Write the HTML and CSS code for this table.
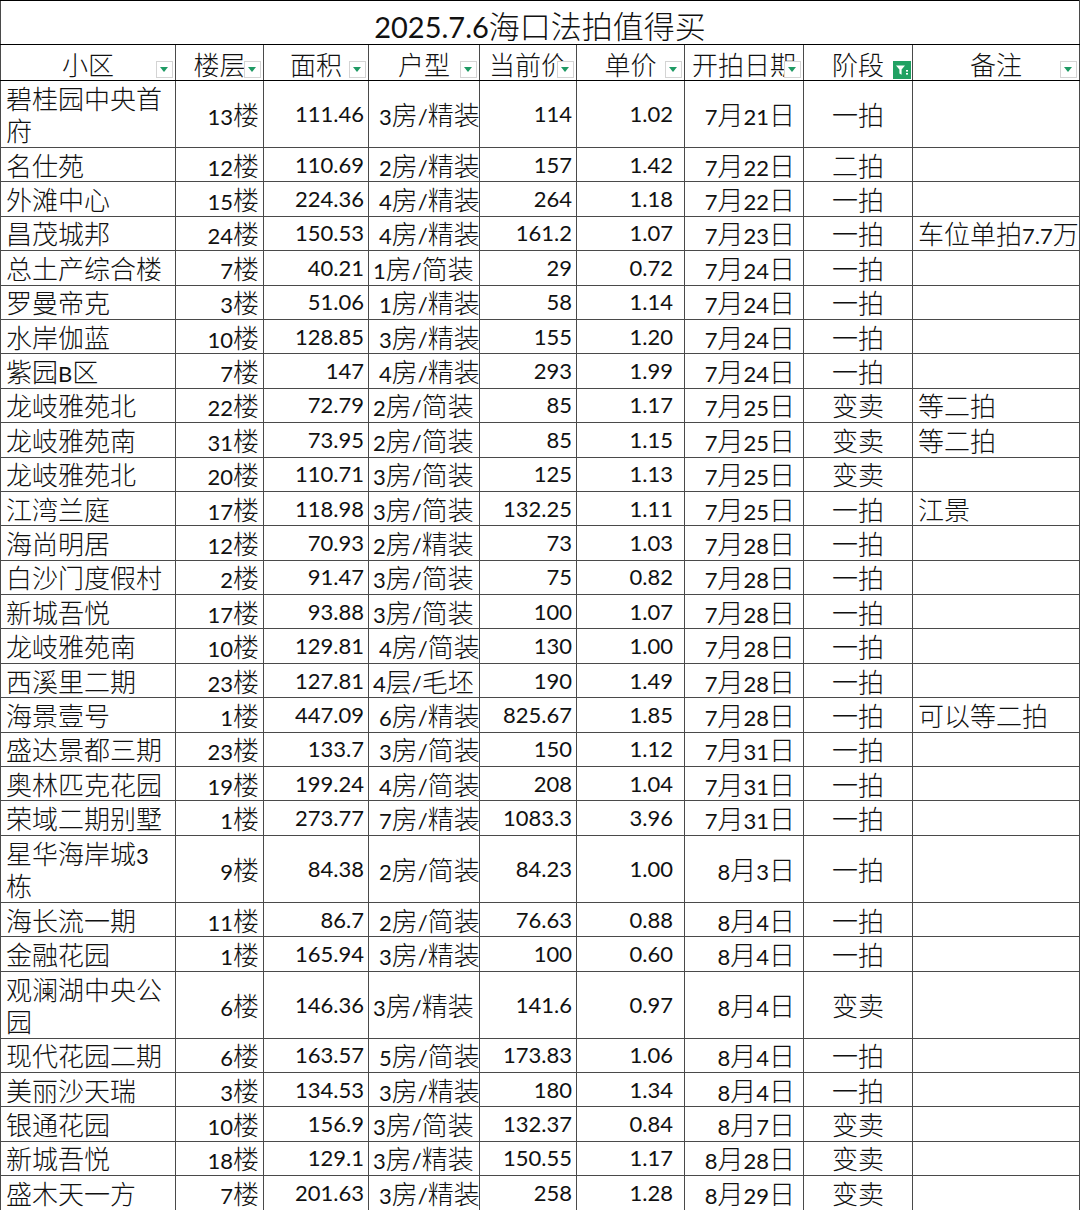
FILE: index.html
```html
<!DOCTYPE html>
<html lang="zh-CN">
<head>
<meta charset="utf-8">
<title>2025.7.6海口法拍值得买</title>
<link rel="stylesheet" href="styles.css">
</head>
<body>
<table class="sheet">
<colgroup>
<col class="w1"><col class="w2"><col class="w3"><col class="w4"><col class="w5"><col class="w6"><col class="w7"><col class="w8"><col class="w9">
</colgroup>
<tr class="title"><td colspan="9"><span class="tn">2025.7.6</span>海口法拍值得买</td></tr>
<tr class="head">
<td>小区<span class="dd"></span></td>
<td>楼层<span class="dd"></span></td>
<td>面积<span class="dd"></span></td>
<td>户型<span class="dd"></span></td>
<td>当前价<span class="dd"></span></td>
<td>单价<span class="dd"></span></td>
<td>开拍日期<span class="dd"></span></td>
<td class="c8h">阶段<span class="flt"><svg width="18" height="18" viewBox="0 0 18 18"><rect width="18" height="18" fill="#21a163"/><path d="M3 4.5h9l-3.4 4v5.2l-2.2-1.2v-4z" fill="#fff"/><rect x="13" y="9" width="2" height="1.6" fill="#fff"/><rect x="13" y="12" width="2" height="1.6" fill="#fff"/></svg></span></td>
<td>备注<span class="dd"></span></td>
</tr>
<tr class="t"><td class="c1">碧桂园中央首<br>府</td><td class="c2"><span class="n">13</span>楼</td><td class="c3 n">111.46</td><td class="c4 sp"><span class="n">3</span>房<span class="n">/</span>精装</td><td class="c5 n">114</td><td class="c6 n">1.02</td><td class="c7"><span class="n">7</span>月<span class="n">21</span>日</td><td class="c8">一拍</td><td class="c9"></td></tr>
<tr class="r"><td class="c1">名仕苑</td><td class="c2"><span class="n">12</span>楼</td><td class="c3 n">110.69</td><td class="c4 sp"><span class="n">2</span>房<span class="n">/</span>精装</td><td class="c5 n">157</td><td class="c6 n">1.42</td><td class="c7"><span class="n">7</span>月<span class="n">22</span>日</td><td class="c8">二拍</td><td class="c9"></td></tr>
<tr class="r"><td class="c1">外滩中心</td><td class="c2"><span class="n">15</span>楼</td><td class="c3 n">224.36</td><td class="c4 sp"><span class="n">4</span>房<span class="n">/</span>精装</td><td class="c5 n">264</td><td class="c6 n">1.18</td><td class="c7"><span class="n">7</span>月<span class="n">22</span>日</td><td class="c8">一拍</td><td class="c9"></td></tr>
<tr class="r"><td class="c1">昌茂城邦</td><td class="c2"><span class="n">24</span>楼</td><td class="c3 n">150.53</td><td class="c4 sp"><span class="n">4</span>房<span class="n">/</span>精装</td><td class="c5 n">161.2</td><td class="c6 n">1.07</td><td class="c7"><span class="n">7</span>月<span class="n">23</span>日</td><td class="c8">一拍</td><td class="c9">车位单拍<span class="n">7.7</span>万</td></tr>
<tr class="r"><td class="c1">总土产综合楼</td><td class="c2"><span class="n">7</span>楼</td><td class="c3 n">40.21</td><td class="c4"><span class="n">1</span>房<span class="n">/</span>简装</td><td class="c5 n">29</td><td class="c6 n">0.72</td><td class="c7"><span class="n">7</span>月<span class="n">24</span>日</td><td class="c8">一拍</td><td class="c9"></td></tr>
<tr class="r"><td class="c1">罗曼帝克</td><td class="c2"><span class="n">3</span>楼</td><td class="c3 n">51.06</td><td class="c4 sp"><span class="n">1</span>房<span class="n">/</span>精装</td><td class="c5 n">58</td><td class="c6 n">1.14</td><td class="c7"><span class="n">7</span>月<span class="n">24</span>日</td><td class="c8">一拍</td><td class="c9"></td></tr>
<tr class="r"><td class="c1">水岸伽蓝</td><td class="c2"><span class="n">10</span>楼</td><td class="c3 n">128.85</td><td class="c4 sp"><span class="n">3</span>房<span class="n">/</span>精装</td><td class="c5 n">155</td><td class="c6 n">1.20</td><td class="c7"><span class="n">7</span>月<span class="n">24</span>日</td><td class="c8">一拍</td><td class="c9"></td></tr>
<tr class="r"><td class="c1">紫园<span class="n">B</span>区</td><td class="c2"><span class="n">7</span>楼</td><td class="c3 n">147</td><td class="c4 sp"><span class="n">4</span>房<span class="n">/</span>精装</td><td class="c5 n">293</td><td class="c6 n">1.99</td><td class="c7"><span class="n">7</span>月<span class="n">24</span>日</td><td class="c8">一拍</td><td class="c9"></td></tr>
<tr class="r"><td class="c1">龙岐雅苑北</td><td class="c2"><span class="n">22</span>楼</td><td class="c3 n">72.79</td><td class="c4"><span class="n">2</span>房<span class="n">/</span>简装</td><td class="c5 n">85</td><td class="c6 n">1.17</td><td class="c7"><span class="n">7</span>月<span class="n">25</span>日</td><td class="c8">变卖</td><td class="c9">等二拍</td></tr>
<tr class="r"><td class="c1">龙岐雅苑南</td><td class="c2"><span class="n">31</span>楼</td><td class="c3 n">73.95</td><td class="c4"><span class="n">2</span>房<span class="n">/</span>简装</td><td class="c5 n">85</td><td class="c6 n">1.15</td><td class="c7"><span class="n">7</span>月<span class="n">25</span>日</td><td class="c8">变卖</td><td class="c9">等二拍</td></tr>
<tr class="r"><td class="c1">龙岐雅苑北</td><td class="c2"><span class="n">20</span>楼</td><td class="c3 n">110.71</td><td class="c4"><span class="n">3</span>房<span class="n">/</span>简装</td><td class="c5 n">125</td><td class="c6 n">1.13</td><td class="c7"><span class="n">7</span>月<span class="n">25</span>日</td><td class="c8">变卖</td><td class="c9"></td></tr>
<tr class="r"><td class="c1">江湾兰庭</td><td class="c2"><span class="n">17</span>楼</td><td class="c3 n">118.98</td><td class="c4"><span class="n">3</span>房<span class="n">/</span>简装</td><td class="c5 n">132.25</td><td class="c6 n">1.11</td><td class="c7"><span class="n">7</span>月<span class="n">25</span>日</td><td class="c8">一拍</td><td class="c9">江景</td></tr>
<tr class="r"><td class="c1">海尚明居</td><td class="c2"><span class="n">12</span>楼</td><td class="c3 n">70.93</td><td class="c4"><span class="n">2</span>房<span class="n">/</span>精装</td><td class="c5 n">73</td><td class="c6 n">1.03</td><td class="c7"><span class="n">7</span>月<span class="n">28</span>日</td><td class="c8">一拍</td><td class="c9"></td></tr>
<tr class="r"><td class="c1">白沙门度假村</td><td class="c2"><span class="n">2</span>楼</td><td class="c3 n">91.47</td><td class="c4"><span class="n">3</span>房<span class="n">/</span>简装</td><td class="c5 n">75</td><td class="c6 n">0.82</td><td class="c7"><span class="n">7</span>月<span class="n">28</span>日</td><td class="c8">一拍</td><td class="c9"></td></tr>
<tr class="r"><td class="c1">新城吾悦</td><td class="c2"><span class="n">17</span>楼</td><td class="c3 n">93.88</td><td class="c4"><span class="n">3</span>房<span class="n">/</span>简装</td><td class="c5 n">100</td><td class="c6 n">1.07</td><td class="c7"><span class="n">7</span>月<span class="n">28</span>日</td><td class="c8">一拍</td><td class="c9"></td></tr>
<tr class="r"><td class="c1">龙岐雅苑南</td><td class="c2"><span class="n">10</span>楼</td><td class="c3 n">129.81</td><td class="c4 sp"><span class="n">4</span>房<span class="n">/</span>简装</td><td class="c5 n">130</td><td class="c6 n">1.00</td><td class="c7"><span class="n">7</span>月<span class="n">28</span>日</td><td class="c8">一拍</td><td class="c9"></td></tr>
<tr class="r"><td class="c1">西溪里二期</td><td class="c2"><span class="n">23</span>楼</td><td class="c3 n">127.81</td><td class="c4"><span class="n">4</span>层<span class="n">/</span>毛坯</td><td class="c5 n">190</td><td class="c6 n">1.49</td><td class="c7"><span class="n">7</span>月<span class="n">28</span>日</td><td class="c8">一拍</td><td class="c9"></td></tr>
<tr class="r"><td class="c1">海景壹号</td><td class="c2"><span class="n">1</span>楼</td><td class="c3 n">447.09</td><td class="c4 sp"><span class="n">6</span>房<span class="n">/</span>精装</td><td class="c5 n">825.67</td><td class="c6 n">1.85</td><td class="c7"><span class="n">7</span>月<span class="n">28</span>日</td><td class="c8">一拍</td><td class="c9">可以等二拍</td></tr>
<tr class="r"><td class="c1">盛达景都三期</td><td class="c2"><span class="n">23</span>楼</td><td class="c3 n">133.7</td><td class="c4 sp"><span class="n">3</span>房<span class="n">/</span>简装</td><td class="c5 n">150</td><td class="c6 n">1.12</td><td class="c7"><span class="n">7</span>月<span class="n">31</span>日</td><td class="c8">一拍</td><td class="c9"></td></tr>
<tr class="r"><td class="c1">奥林匹克花园</td><td class="c2"><span class="n">19</span>楼</td><td class="c3 n">199.24</td><td class="c4 sp"><span class="n">4</span>房<span class="n">/</span>简装</td><td class="c5 n">208</td><td class="c6 n">1.04</td><td class="c7"><span class="n">7</span>月<span class="n">31</span>日</td><td class="c8">一拍</td><td class="c9"></td></tr>
<tr class="r"><td class="c1">荣域二期别墅</td><td class="c2"><span class="n">1</span>楼</td><td class="c3 n">273.77</td><td class="c4 sp"><span class="n">7</span>房<span class="n">/</span>精装</td><td class="c5 n">1083.3</td><td class="c6 n">3.96</td><td class="c7"><span class="n">7</span>月<span class="n">31</span>日</td><td class="c8">一拍</td><td class="c9"></td></tr>
<tr class="t"><td class="c1">星华海岸城<span class="n">3</span><br>栋</td><td class="c2"><span class="n">9</span>楼</td><td class="c3 n">84.38</td><td class="c4 sp"><span class="n">2</span>房<span class="n">/</span>简装</td><td class="c5 n">84.23</td><td class="c6 n">1.00</td><td class="c7"><span class="n">8</span>月<span class="n">3</span>日</td><td class="c8">一拍</td><td class="c9"></td></tr>
<tr class="r"><td class="c1">海长流一期</td><td class="c2"><span class="n">11</span>楼</td><td class="c3 n">86.7</td><td class="c4 sp"><span class="n">2</span>房<span class="n">/</span>简装</td><td class="c5 n">76.63</td><td class="c6 n">0.88</td><td class="c7"><span class="n">8</span>月<span class="n">4</span>日</td><td class="c8">一拍</td><td class="c9"></td></tr>
<tr class="r"><td class="c1">金融花园</td><td class="c2"><span class="n">1</span>楼</td><td class="c3 n">165.94</td><td class="c4 sp"><span class="n">3</span>房<span class="n">/</span>精装</td><td class="c5 n">100</td><td class="c6 n">0.60</td><td class="c7"><span class="n">8</span>月<span class="n">4</span>日</td><td class="c8">一拍</td><td class="c9"></td></tr>
<tr class="t"><td class="c1">观澜湖中央公<br>园</td><td class="c2"><span class="n">6</span>楼</td><td class="c3 n">146.36</td><td class="c4"><span class="n">3</span>房<span class="n">/</span>精装</td><td class="c5 n">141.6</td><td class="c6 n">0.97</td><td class="c7"><span class="n">8</span>月<span class="n">4</span>日</td><td class="c8">变卖</td><td class="c9"></td></tr>
<tr class="r"><td class="c1">现代花园二期</td><td class="c2"><span class="n">6</span>楼</td><td class="c3 n">163.57</td><td class="c4 sp"><span class="n">5</span>房<span class="n">/</span>简装</td><td class="c5 n">173.83</td><td class="c6 n">1.06</td><td class="c7"><span class="n">8</span>月<span class="n">4</span>日</td><td class="c8">一拍</td><td class="c9"></td></tr>
<tr class="r"><td class="c1">美丽沙天瑞</td><td class="c2"><span class="n">3</span>楼</td><td class="c3 n">134.53</td><td class="c4 sp"><span class="n">3</span>房<span class="n">/</span>精装</td><td class="c5 n">180</td><td class="c6 n">1.34</td><td class="c7"><span class="n">8</span>月<span class="n">4</span>日</td><td class="c8">一拍</td><td class="c9"></td></tr>
<tr class="r"><td class="c1">银通花园</td><td class="c2"><span class="n">10</span>楼</td><td class="c3 n">156.9</td><td class="c4"><span class="n">3</span>房<span class="n">/</span>简装</td><td class="c5 n">132.37</td><td class="c6 n">0.84</td><td class="c7"><span class="n">8</span>月<span class="n">7</span>日</td><td class="c8">变卖</td><td class="c9"></td></tr>
<tr class="r"><td class="c1">新城吾悦</td><td class="c2"><span class="n">18</span>楼</td><td class="c3 n">129.1</td><td class="c4"><span class="n">3</span>房<span class="n">/</span>精装</td><td class="c5 n">150.55</td><td class="c6 n">1.17</td><td class="c7"><span class="n">8</span>月<span class="n">28</span>日</td><td class="c8">变卖</td><td class="c9"></td></tr>
<tr class="r"><td class="c1">盛木天一方</td><td class="c2"><span class="n">7</span>楼</td><td class="c3 n">201.63</td><td class="c4 sp"><span class="n">3</span>房<span class="n">/</span>精装</td><td class="c5 n">258</td><td class="c6 n">1.28</td><td class="c7"><span class="n">8</span>月<span class="n">29</span>日</td><td class="c8">变卖</td><td class="c9"></td></tr>
</table>
</body>
</html>
```

FILE: styles.css
```css
html, body {
  margin: 0;
  padding: 0;
  background: #fff;
}

.sheet {
  border-collapse: collapse;
  table-layout: fixed;
  width: 1079px;
  font-family: "Noto Sans CJK SC", sans-serif;
  font-weight: 300;
  font-size: 26px;
  color: #111;
  border: 1px solid #000;
}

.w1 { width: 175px; }
.w2 { width: 88px; }
.w3 { width: 105px; }
.w4 { width: 111px; }
.w5 { width: 97px; }
.w6 { width: 108px; }
.w7 { width: 119px; }
.w8 { width: 109px; }
.w9 { width: 167px; }

.sheet td {
  border: 1px solid #4a4a4a;
  padding: 0 4px;
  white-space: nowrap;
  vertical-align: middle;
  line-height: 28px;
}

.n {
  font-family: "Lato", sans-serif;
  font-weight: 400;
  font-size: 22px;
}
span.n {
  line-height: 16px;
}

.title { height: 44px; }
.title td {
  text-align: center;
  font-size: 31px;
  line-height: 36px;
  padding-top: 4px;
  border-bottom-color: #000;
  border-top-color: #000;
}
.tn {
  font-family: "Lato", sans-serif;
  font-weight: 400;
  font-size: 29px;
  line-height: 20px;
}

.head { height: 36px; }
.head td {
  position: relative;
  text-align: center;
  padding: 3px 0 0 0;
  border-bottom-color: #000;
  line-height: 28px;
}

.dd {
  position: absolute;
  right: 2px;
  bottom: 2px;
  width: 17px;
  height: 17px;
  box-sizing: border-box;
  background: #fff;
  border: 1px solid #d4d4d4;
}
.dd::after {
  content: "";
  position: absolute;
  left: 3px;
  top: 5px;
  border-left: 4.5px solid transparent;
  border-right: 4.5px solid transparent;
  border-top: 5px solid #1f9a64;
}

.flt {
  position: absolute;
  right: 1px;
  bottom: 1px;
  width: 18px;
  height: 18px;
  line-height: 0;
}

.r { height: 34.4px; }
.t { height: 67px; }
.t td { line-height: 32px; }

.c1 { text-align: left; padding-left: 5px !important; }
.c2 { text-align: right; }
.c3 { text-align: right; }
.c4 { text-align: left; padding-left: 4px !important; }
.c4.sp { padding-left: 10px !important; }
.c5 { text-align: right; }
.c6 { text-align: right; padding-right: 11px !important; }
.c7 { text-align: right; padding-right: 8px !important; }
.c8 { text-align: center; }
.c9 { text-align: left; padding-left: 5px !important; }

.sheet td.c8, .sheet td.c8h { border-left-color: #000; }
```
